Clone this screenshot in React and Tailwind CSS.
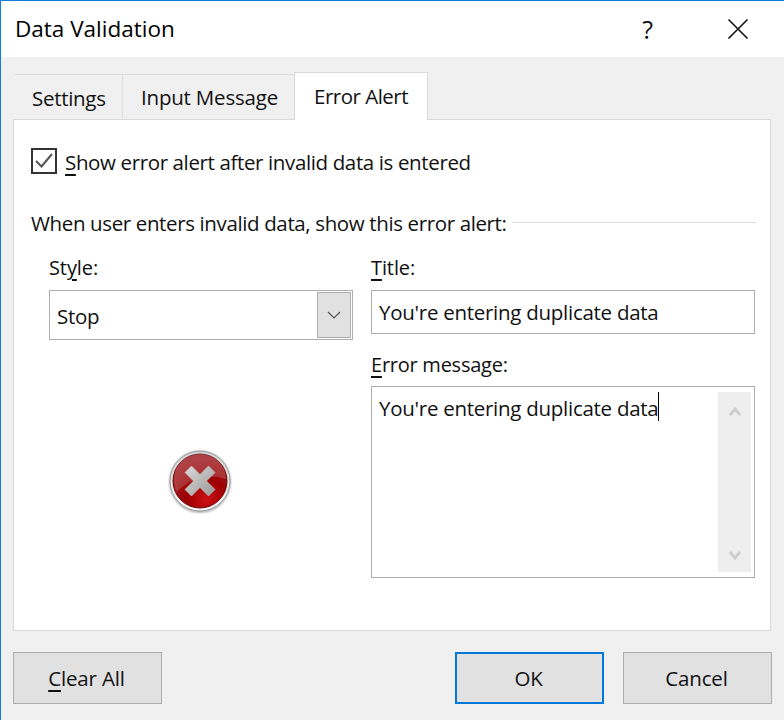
import React from "react";

const font = { fontFamily: '"Open Sans", "Noto Sans", sans-serif' };

function U({ children }) {
  return <span className="underline decoration-[2px] underline-offset-[4px]">{children}</span>;
}

function ErrorIcon() {
  return (
    <svg width="66" height="66" viewBox="0 0 66 66">
      <defs>
        <radialGradient id="red" cx="0.62" cy="0.85" r="0.75">
          <stop offset="0" stopColor="#cc1012" />
          <stop offset="0.5" stopColor="#9c0003" />
          <stop offset="1" stopColor="#a01c20" />
        </radialGradient>
        <linearGradient id="ring" x1="0" y1="0" x2="0" y2="1">
          <stop offset="0" stopColor="#cfcfcf" />
          <stop offset="1" stopColor="#ffffff" />
        </linearGradient>
        <linearGradient id="cross" x1="0" y1="0" x2="1" y2="1">
          <stop offset="0" stopColor="#dcdcdc" />
          <stop offset="1" stopColor="#989898" />
        </linearGradient>
        <filter id="sh" x="-20%" y="-20%" width="140%" height="140%">
          <feGaussianBlur stdDeviation="1" />
        </filter>
      </defs>
      <circle cx="33" cy="34" r="31" fill="#888" opacity="0.6" filter="url(#sh)" />
      <circle cx="33" cy="33" r="30" fill="url(#ring)" stroke="#9a9a9a" strokeWidth="1" />
      <circle cx="33" cy="33" r="27" fill="url(#red)" stroke="#6a0608" strokeWidth="1" />
      <path d="M7 31 A26 26 0 0 1 59 31 Q33 22 9 44 Q7 38 7 31 Z" fill="#ffffff" opacity="0.16" />
      <path
        d="M24.5 18 L33 26.5 L41.5 18 L48 24.5 L39.5 33 L48 41.5 L41.5 48 L33 39.5 L24.5 48 L18 41.5 L26.5 33 L18 24.5 Z"
        fill="url(#cross)"
        stroke="#c8c8c8"
        strokeWidth="0.6"
        strokeLinejoin="round"
      />
    </svg>
  );
}

function Btn({ children, cls }) {
  return (
    <div className={`w-[149px] h-[52px] flex items-center justify-center bg-[#e1e1e1] text-[20.5px] tracking-[-0.15px] text-[#111] pr-[2px] pt-[1px] ${cls}`}>
      {children}
    </div>
  );
}

export default function App() {
  return (
    <div style={font} className="w-[784px] h-[720px] flex flex-col bg-[#f0f0f0] border-t border-l border-[#0f7ed8] text-[#111] overflow-hidden">
      <div className="h-[56px] shrink-0 bg-white flex items-center pl-[14px]">
        <span className="text-[22.5px] leading-none text-black">Data Validation</span>
        <div className="ml-auto flex items-center">
          <span className="text-[25px] leading-none text-[#111] mr-[74px]">?</span>
          <svg width="22" height="22" viewBox="0 0 22 22" className="mr-[35px]">
            <path d="M1.5 1.5 L20.5 20.5 M20.5 1.5 L1.5 20.5" stroke="#111" strokeWidth="1.6" fill="none" />
          </svg>
        </div>
      </div>

      <div className="flex-1 flex flex-col pl-[12px] pr-[12px]">
        <div className="h-[62px] flex items-end relative z-10 pl-[2px] text-[20.5px]">
          <div className="w-[107px] h-[45px] border-t border-[#dcdcdc] flex items-center pl-[17px] pt-[2px] tracking-[-0.3px]">Settings</div>
          <div className="w-[172px] h-[45px] border-t border-l border-[#dcdcdc] flex items-center pl-[18px] tracking-[-0.2px]">Input Message</div>
          <div className="w-[134px] h-[48px] mb-[-1px] bg-white border-t border-l border-r border-[#d9d9d9] flex items-center pl-[19px] tracking-[-0.5px]">Error Alert</div>
        </div>

        <div className="w-[758px] h-[512px] bg-white border border-[#d9d9d9] pl-[17px] pr-[14px]">
          <div className="flex items-center mt-[28px] h-[26px]">
            <div className="w-[26px] h-[26px] border-2 border-[#333] flex items-center justify-center">
              <svg width="20" height="20" viewBox="0 0 20 20">
                <path d="M2 10 L7.5 15.5 L18 3" stroke="#555" strokeWidth="2" fill="none" />
              </svg>
            </div>
            <span className="ml-[8px] text-[20.5px] leading-none tracking-[-0.37px] whitespace-nowrap pt-[2px]"><U>S</U>how error alert after invalid data is entered</span>
          </div>

          <div className="flex items-center mt-[36px] h-[26px]">
            <span className="text-[20.5px] leading-none tracking-[-0.37px] whitespace-nowrap">When user enters invalid data, show this error alert:</span>
            <div className="flex-1 h-px bg-[#dcdcdc] ml-[5px] mb-[1px]" />
          </div>

          <div className="flex mt-[19px] pl-[18px]">
            <div className="w-[304px] flex flex-col">
              <span className="h-[27px] text-[20px] leading-[25px] tracking-[-0.1px]">St<U>y</U>le:</span>
              <div className="mt-[8px] h-[50px] border border-[#adadad] flex items-center justify-between pl-[7px] pr-[1px]">
                <span className="text-[20.5px] tracking-[-0.3px] pt-[2px]">Stop</span>
                <div className="w-[34px] h-[46px] bg-[#e1e1e1] border border-[#adadad] flex items-center justify-center">
                  <svg width="14" height="8" viewBox="0 0 14 8">
                    <path d="M1 1 L7 7 L13 1" stroke="#555" strokeWidth="1.2" fill="none" />
                  </svg>
                </div>
              </div>
              <div className="flex justify-center pr-[2px] mt-[108px]">
                <ErrorIcon />
              </div>
            </div>

            <div className="w-[384px] ml-[18px] flex flex-col">
              <span className="h-[27px] text-[20px] leading-[25px] tracking-[-0.1px]"><U>T</U>itle:</span>
              <div className="mt-[8px] h-[44px] border border-[#adadad] flex items-center pl-[7px] text-[20.5px] tracking-[-0.27px] whitespace-nowrap">You're entering duplicate data</div>
              <span className="mt-[17px] h-[27px] text-[20px] leading-[27px] tracking-[-0.25px]"><U>E</U>rror message:</span>
              <div className="mt-[8px] h-[192px] border border-[#adadad] flex justify-between pl-[7px] pr-[3px] pt-[5px] pb-[5px]">
                <div className="flex items-start text-[20.5px] tracking-[-0.27px] leading-[32px] whitespace-nowrap">
                  You're entering duplicate data
                  <span className="w-px h-[29px] bg-black" />
                </div>
                <div className="w-[33px] bg-[#eeeeee] flex flex-col items-center justify-between pt-[15px] pb-[12px]">
                  <svg width="12" height="9" viewBox="0 0 12 9">
                    <path d="M1 8 L6 2 L11 8" stroke="#cdcdcd" strokeWidth="2.8" fill="none" />
                  </svg>
                  <svg width="12" height="9" viewBox="0 0 12 9">
                    <path d="M1 1 L6 7 L11 1" stroke="#cdcdcd" strokeWidth="2.8" fill="none" />
                  </svg>
                </div>
              </div>
            </div>
          </div>
        </div>

        <div className="flex mt-[21px] w-[759px]">
          <Btn cls="border border-[#adadad]"><U>C</U>lear All</Btn>
          <Btn cls="ml-auto border-2 border-[#0078d7]">OK</Btn>
          <Btn cls="ml-[19px] border border-[#adadad]">Cancel</Btn>
        </div>
      </div>
    </div>
  );
}
